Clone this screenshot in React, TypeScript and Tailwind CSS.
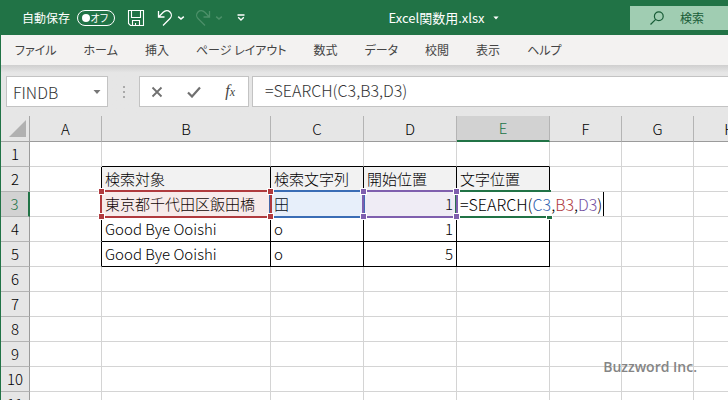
import React from "react";
import clsx from "clsx";

const TABS = [
  "ファイル",
  "ホーム",
  "挿入",
  "ページ レイアウト",
  "数式",
  "データ",
  "校閲",
  "表示",
  "ヘルプ",
];

const COLUMNS = [
  { name: "A", width: "w-[72px]" },
  { name: "B", width: "w-[169px]" },
  { name: "C", width: "w-[93px]" },
  { name: "D", width: "w-[93px]" },
  { name: "E", width: "w-[93px]" },
  { name: "F", width: "w-[72px]" },
  { name: "G", width: "w-[72px]" },
  { name: "H", width: "w-[72px]" },
];

const ROWS = Array.from({ length: 11 }, (_, i) => i + 1);

const CELLS: Record<string, string> = {
  B2: "検索対象",
  C2: "検索文字列",
  D2: "開始位置",
  E2: "文字位置",
  B3: "東京都千代田区飯田橋",
  C3: "田",
  D3: "1",
  B4: "Good Bye Ooishi",
  C4: "o",
  D4: "1",
  B5: "Good Bye Ooishi",
  C5: "o",
  D5: "5",
};

const RANGES: Record<string, { box: string; handle: string }> = {
  B3: { box: "z-20 border-[#b03a3e] bg-[#b03a3e]/10", handle: "bg-[#b03a3e]" },
  C3: { box: "z-10 border-[#3a6db5] bg-[#3a78d8]/12", handle: "bg-[#3a6db5]" },
  D3: { box: "z-20 border-[#7f5fae] bg-[#7f5fae]/12", handle: "bg-[#7f5fae]" },
};

const HANDLE_CORNERS = [
  "-top-1 -left-1",
  "-top-1 -right-1",
  "-bottom-1 -left-1",
  "-bottom-1 -right-1",
];

const Caret = ({ className }: { className?: string }) => (
  <svg viewBox="0 0 8 4" className={clsx("h-1", className)} aria-hidden="true">
    <path d="M0.5 0h7L4 4z" fill="currentColor" />
  </svg>
);

const Chevron = () => (
  <svg viewBox="0 0 8 6" className="h-1.5 w-2" aria-hidden="true">
    <path d="M1.2 1.6 4 4l2.8-2.4" fill="none" stroke="currentColor" strokeWidth="1.5" />
  </svg>
);

const UndoIcon = ({ className }: { className?: string }) => (
  <svg viewBox="0 0 16 18" className={clsx("h-[18px] w-4", className)} aria-hidden="true">
    <path
      d="M1.5 2v6h6M1.8 7.7 6.2 3.2C8.2 1.3 11.2 1.2 13 3c1.8 1.8 1.8 4.7 0 6.5L6 16.5"
      fill="none"
      stroke="currentColor"
      strokeWidth="1.3"
    />
  </svg>
);

const TitleBar = () => (
  <header className="flex h-[35px] shrink-0 items-center bg-[#217346] pl-[21px] font-normal text-white">
    <label htmlFor="autosave" className="text-xs">
      自動保存
    </label>
    <button
      id="autosave"
      role="switch"
      aria-checked="false"
      className="ml-[7px] flex h-4 w-[38px] items-center justify-between rounded-full border border-white pr-1.5 pl-1"
    >
      <span className="size-2 rounded-full bg-white" />
      <span className="text-[10px] leading-none [font-feature-settings:'palt']">オフ</span>
    </button>
    <button aria-label="上書き保存" className="ml-3">
      <svg viewBox="0 0 18 18" className="size-[18px]" fill="none" stroke="currentColor" strokeWidth="1.1">
        <path d="M1.5 1.5h15v15h-13l-2-2zM4.5 1.5v7h9v-7M5.5 16.5v-5h7v5M8.5 16.5V14" />
      </svg>
    </button>
    <button aria-label="元に戻す" className="ml-3">
      <UndoIcon />
    </button>
    <button aria-label="元に戻すメニュー" className="ml-1">
      <Chevron />
    </button>
    <button aria-label="やり直し" className="ml-2.5 text-[#4c9069]">
      <UndoIcon className="-scale-x-100" />
    </button>
    <button aria-label="やり直しメニュー" className="ml-1 text-[#4c9069]">
      <Chevron />
    </button>
    <button aria-label="クイック アクセス ツール バーのカスタマイズ" className="ml-3.5">
      <svg viewBox="0 0 8 7" className="h-[7px] w-2">
        <path d="M0.5 1h7M1.2 3.2 4 6l2.8-2.8" fill="none" stroke="currentColor" strokeWidth="1.3" />
      </svg>
    </button>
    <button className="mr-auto ml-auto flex items-center gap-2 pl-3 text-[13px]">
      Excel関数用.xlsx
      <Caret className="w-1.5" />
    </button>
    <label className="flex h-6 w-[98px] items-center gap-4 overflow-hidden bg-[#a0cdb2] pl-5 text-[#185c37]">
      <svg viewBox="0 0 14 14" className="size-3.5 shrink-0" fill="none" stroke="currentColor" strokeWidth="1.2">
        <circle cx="8.8" cy="5.2" r="4.4" />
        <path d="M5.7 8.3.5 13.5" />
      </svg>
      <input
        type="search"
        aria-label="検索"
        placeholder="検索"
        className="w-full min-w-0 bg-transparent text-xs outline-none placeholder:text-[#185c37]"
      />
    </label>
  </header>
);

const RibbonTabs = () => (
  <nav className="flex h-[30px] shrink-0 items-center gap-[27px] bg-[#f3f2f1] pl-3.5 text-xs font-normal whitespace-nowrap text-[#444] [font-feature-settings:'palt']">
    {TABS.map((tab) => (
      <button key={tab}>{tab}</button>
    ))}
  </nav>
);

const FormulaBar = () => (
  <div className="flex h-[51px] shrink-0 bg-linear-to-b from-[#cfcfcf] via-[#e6e6e6] via-15% to-[#e6e6e6] pt-[11px] pl-[5px]">
    <div className="flex h-[31px] w-[102px] items-center border border-[#c3c3c3] bg-white px-1.5">
      <input
        aria-label="名前ボックス"
        defaultValue="FINDB"
        className="w-full min-w-0 text-base text-[#333] outline-none"
      />
      <button aria-label="名前の一覧" className="text-[#777]">
        <Caret className="w-2" />
      </button>
    </div>
    <div className="flex w-[31px] flex-col items-center gap-[3px] pt-2.5">
      <span className="size-0.5 bg-[#aaa]" />
      <span className="size-0.5 bg-[#aaa]" />
      <span className="size-0.5 bg-[#aaa]" />
    </div>
    <div className="flex h-[31px] w-[110px] items-center justify-between border border-[#c3c3c3] bg-white pr-[13px] pl-[11px] text-[#707070]">
      <button aria-label="キャンセル">
        <svg viewBox="0 0 12 12" className="size-3">
          <path d="M1.5 1.5l9 9M10.5 1.5l-9 9" stroke="currentColor" strokeWidth="1.8" />
        </svg>
      </button>
      <button aria-label="入力">
        <svg viewBox="0 0 14 12" className="h-3 w-3.5">
          <path d="M1 6.5l4 4L13 1.5" fill="none" stroke="currentColor" strokeWidth="2.2" />
        </svg>
      </button>
      <button
        aria-label="関数の挿入"
        className="font-['Liberation_Serif',serif] text-base leading-none font-normal text-[#444] italic"
      >
        f<span className="text-xs">x</span>
      </button>
    </div>
    <input
      aria-label="数式バー"
      defaultValue="=SEARCH(C3,B3,D3)"
      className="ml-[3px] h-[31px] min-w-0 flex-1 border border-r-0 border-[#c3c3c3] bg-white pb-1 pl-3 text-base text-[#333] outline-none"
    />
  </div>
);

const RangeBox = ({ box, handle }: { box: string; handle: string }) => (
  <span className={clsx("pointer-events-none absolute -inset-0.5 border-2", box)}>
    {HANDLE_CORNERS.map((corner) => (
      <span key={corner} className={clsx("absolute size-[7px] border border-white", corner, handle)} />
    ))}
  </span>
);

const EditingCell = () => (
  <>
    <span className="pointer-events-none absolute -inset-0.5 z-10 border-2 border-[#217346]">
      <span className="absolute -right-1 -bottom-1 size-[7px] border border-white bg-[#217346]" />
    </span>
    <span className="absolute top-0 left-0 z-10 flex h-6 items-center bg-white pl-[3px] text-base">
      <span>
        =SEARCH(<span className="text-[#3565b0]">C3</span>,<span className="text-[#b03a3e]">B3</span>,
        <span className="text-[#7553a3]">D3</span>)
      </span>
      <span className="ml-px h-6 w-px bg-black" />
    </span>
  </>
);

// Right and bottom edges of a cell, black inside and around B2:E5
const cellBorder = (col: number, row: number) =>
  clsx(
    row >= 2 && row <= 5 && col <= 4 ? "border-r-black" : "border-r-[#d4d4d4]",
    row <= 5 && col >= 1 && col <= 4 ? "border-b-black" : "border-b-[#d4d4d4]"
  );

const Sheet = () => (
  <main className="min-h-0 flex-1 overflow-hidden bg-white">
    <table className="w-[765px] table-fixed border-separate border-spacing-0 text-[15px] leading-6 text-black">
      <thead>
        <tr className="h-[26px]">
          <th className="w-[29px] border-r border-b border-[#a6a6a6] bg-[#e6e6e6] p-0">
            <svg viewBox="0 0 17 17" className="ml-2 size-[17px]" aria-label="すべて選択">
              <path d="M17 0v17H0z" fill="#b1b1b1" />
            </svg>
          </th>
          {COLUMNS.map((col) => (
            <th
              key={col.name}
              scope="col"
              className={clsx(
                "border-r border-r-[#b4b4b4] p-0 font-light",
                col.width,
                col.name === "E"
                  ? "border-b-2 border-b-[#217346] bg-[#d2d2d2] text-[#217346]"
                  : "border-b border-b-[#9b9b9b] bg-[#e6e6e6]"
              )}
            >
              {col.name}
            </th>
          ))}
        </tr>
      </thead>
      <tbody>
        {ROWS.map((row) => (
          <tr key={row} className="h-[25px]">
            <th
              scope="row"
              className={clsx(
                "border-b border-b-[#b4b4b4] p-0 font-light",
                row === 3
                  ? "border-r-2 border-r-[#217346] bg-[#d2d2d2] text-[#217346]"
                  : "border-r border-r-[#9b9b9b] bg-[#e6e6e6]"
              )}
            >
              {row}
            </th>
            {COLUMNS.map((col, i) => {
              const id = `${col.name}${row}`;
              const range = RANGES[id];
              return (
                <td
                  key={id}
                  className={clsx(
                    "relative border-r border-b p-0 px-[3px] whitespace-nowrap",
                    cellBorder(i, row),
                    row === 2 && CELLS[id] && "bg-[#f2f2f2]",
                    col.name === "D" && row > 2 && "text-right"
                  )}
                >
                  {range && <RangeBox {...range} />}
                  {id === "E3" ? <EditingCell /> : CELLS[id]}
                </td>
              );
            })}
          </tr>
        ))}
      </tbody>
    </table>
  </main>
);

const App: React.FC = () => {
  return (
    <div className="relative flex h-screen flex-col overflow-hidden border-l border-[#217346] font-['Noto_Sans_CJK_JP',sans-serif] font-light">
      <TitleBar />
      <RibbonTabs />
      <FormulaBar />
      <Sheet />
      <p className="absolute right-[31px] bottom-[23px] z-30 font-['Open_Sans',sans-serif] text-sm font-semibold text-[#858585]">
        Buzzword Inc.
      </p>
    </div>
  );
};

export default App;
